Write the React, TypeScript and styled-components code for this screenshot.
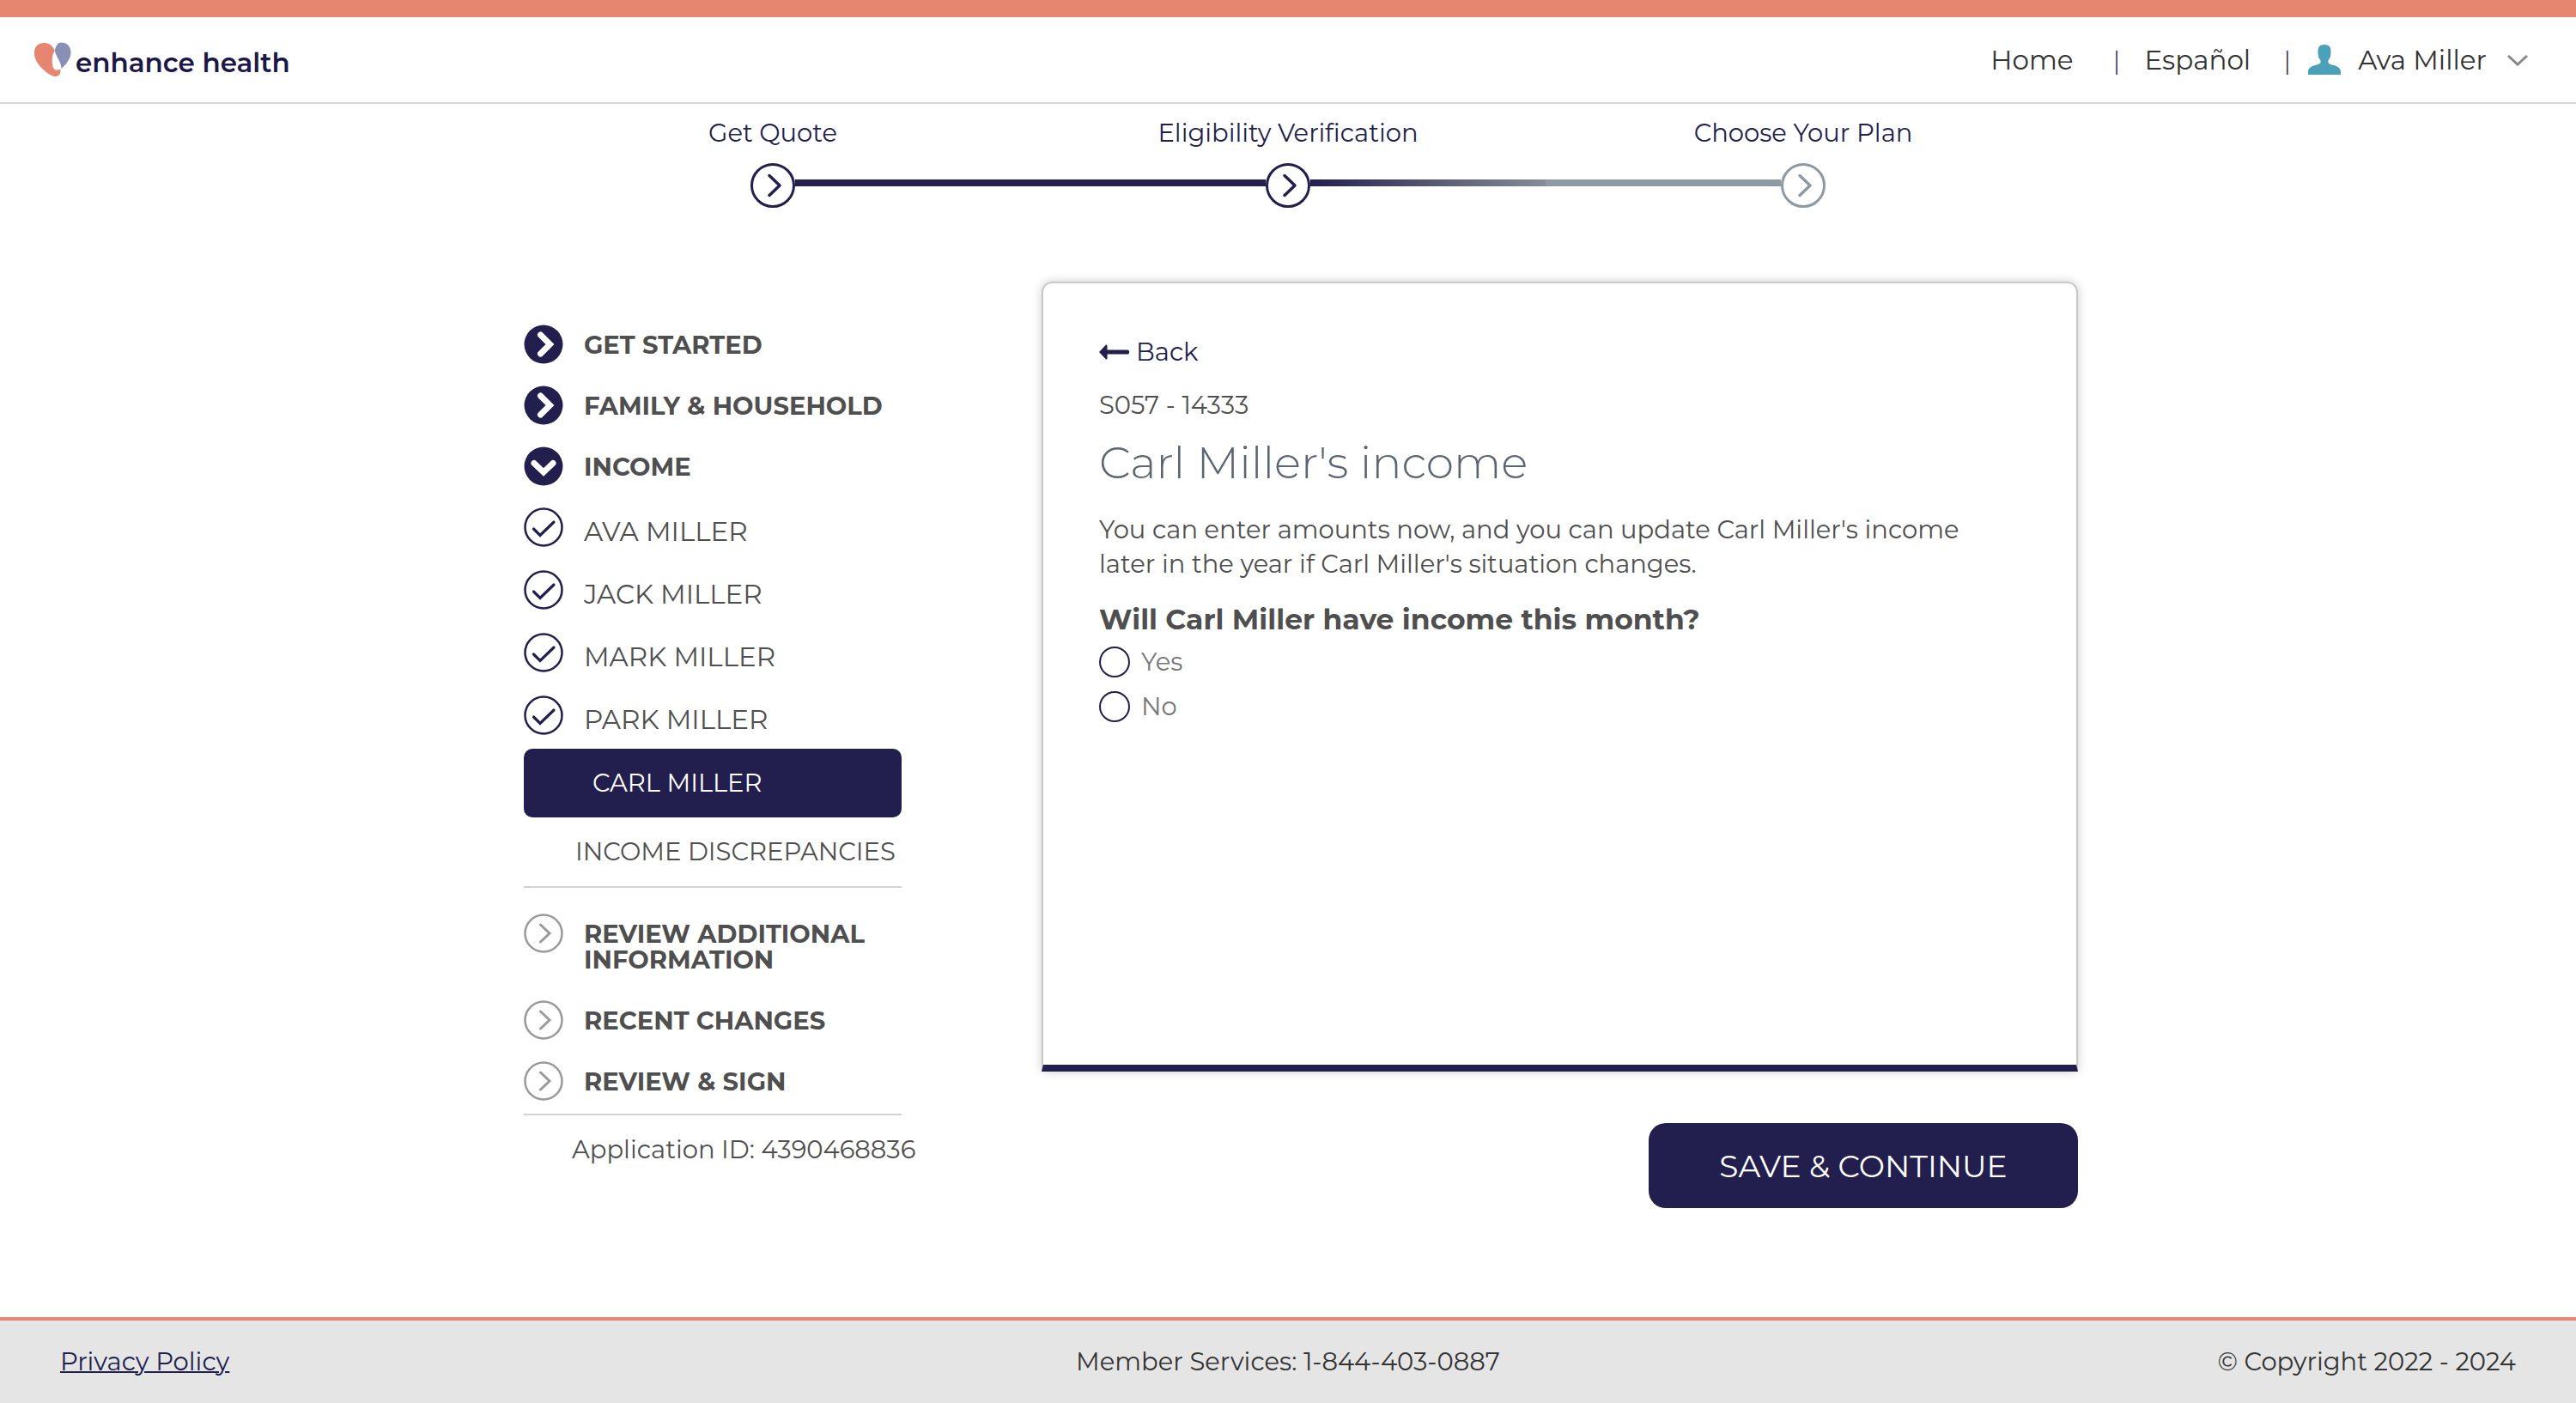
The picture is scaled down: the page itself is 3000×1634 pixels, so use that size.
import React, { useState } from 'react';
import styled, { createGlobalStyle } from 'styled-components';

const navy = '#221f4f';
const coral = '#e68570';
const slate = '#8e99a5';
const ink = '#4f4f4f';

const GlobalStyle = createGlobalStyle`
  *, *::before, *::after { box-sizing: border-box; }
  body {
    margin: 0;
    background: #fff;
    color: ${ink};
    font-family: Montserrat, Inter, "Open Sans", sans-serif;
    font-size: 29px;
    font-weight: 400;
    line-height: 36px;
  }
  h1, p, ul, ol, fieldset, legend { margin: 0; padding: 0; border: 0; }
  ul, ol { list-style: none; }
  a { color: inherit; text-decoration: none; }
  button { font: inherit; color: inherit; border: 0; padding: 0; background: none; cursor: pointer; }
  svg { display: block; flex: none; }
`;

const Page = styled.div`
  min-height: 100vh;
  display: flex;
  flex-direction: column;
`;

const Header = styled.header`
  display: flex;
  align-items: center;
  justify-content: space-between;
  height: 121px;
  padding: 0 56px 0 40px;
  border-top: 20px solid ${coral};
  border-bottom: 2px solid #d8d8d8;
`;

const Brand = styled.a`
  display: flex;
  align-items: flex-end;
  gap: 5px;
  color: #1b1848;
  font-size: 31px;
  font-weight: 600;
`;

const Nav = styled.nav`
  display: flex;
  align-items: center;
  color: #333;
  font-size: 31px;
`;

const Separator = styled.span<{ $before: number; $after: number }>`
  margin: 0 ${({ $after }) => $after}px 0 ${({ $before }) => $before}px;
  color: ${navy};
  font-weight: 300;
`;

const AccountButton = styled.button`
  display: flex;
  align-items: center;
  gap: 20px;
`;

const Steps = styled.ol`
  display: grid;
  grid-template-columns: repeat(3, 1fr);
  width: 60%;
  margin: 0 auto;
  padding-top: 16px;
`;

const Step = styled.li`
  display: flex;
  flex-direction: column;
  gap: 17px;
  color: ${navy};
  text-align: center;
`;

const Track = styled.div`
  display: flex;
  align-items: center;
`;

const Segment = styled.span<{ $fill?: string }>`
  flex: 1;
  height: 8px;
  margin-bottom: 6px;
  background: ${({ $fill }) => $fill ?? 'transparent'};
`;

const Main = styled.main`
  display: flex;
  align-items: flex-start;
  gap: 163px;
  width: 100%;
  max-width: 1840px;
  margin: 86px auto 60px;
  padding-left: 30px;
`;

const Sidebar = styled.nav`
  flex: none;
  width: 440px;
  padding-top: 50px;
  line-height: 30px;
`;

const SectionList = styled.ul`
  display: grid;
  gap: 25px;
`;

const PersonList = styled.ul`
  display: grid;
  gap: 27px;
  margin: 25px 0 16px;
`;

const NavRow = styled.a`
  display: flex;
  align-items: flex-start;
  gap: 24px;
`;

const SectionLabel = styled.span`
  padding: 9px 0 7px;
  font-weight: 700;
`;

const PersonLabel = styled.span`
  padding-top: 10px;
  font-size: 31px;
  line-height: 36px;
`;

const CurrentItem = styled.a`
  display: flex;
  align-items: center;
  height: 80px;
  padding-left: 80px;
  border-radius: 10px;
  background: ${navy};
  color: #fff;
`;

const PlainItem = styled.a`
  display: block;
  padding: 25px 0 25px 60px;
  white-space: nowrap;
`;

const Divider = styled.hr<{ $before?: number; $after?: number }>`
  height: 2px;
  margin: ${({ $before }) => $before ?? 0}px 0 ${({ $after }) => $after ?? 0}px;
  border: 0;
  background: #d2d2d2;
`;

const ApplicationId = styled.p`
  padding: 25px 0 0 56px;
  white-space: nowrap;
`;

const Content = styled.form`
  flex: 1;
  display: flex;
  flex-direction: column;
  align-items: flex-end;
  gap: 60px;
`;

const Card = styled.section`
  width: 100%;
  min-height: 920px;
  padding: 60px 80px 60px 65px;
  border: 2px solid #c9c9c9;
  border-bottom: 8px solid ${navy};
  border-radius: 12px 12px 0 0;
  box-shadow: 0 0 12px rgba(0, 0, 0, 0.2);
  line-height: 40px;
`;

const BackButton = styled.button`
  display: flex;
  align-items: center;
  gap: 8px;
  color: ${navy};
`;

const ScreenCode = styled.p`
  margin-top: 22px;
`;

const Title = styled.h1`
  margin-top: 17px;
  color: #5c6673;
  font-size: 52px;
  font-weight: 300;
  line-height: 60px;
`;

const Intro = styled.p`
  margin-top: 28px;
`;

const Question = styled.fieldset`
  margin-top: 24px;
`;

const Legend = styled.legend`
  font-size: 33px;
  font-weight: 700;
`;

const Option = styled.label`
  display: flex;
  align-items: center;
  gap: 13px;
  width: fit-content;
  margin-top: 10px;
  color: #777;
  cursor: pointer;

  & + & { margin-top: 12px; }
`;

const Radio = styled.input`
  appearance: none;
  width: 36px;
  height: 36px;
  margin: 2px 0;
  border: 2px solid ${navy};
  border-radius: 50%;
  background: #fff;

  &:checked { background: radial-gradient(${navy} 50%, #fff 54%); }
`;

const SaveButton = styled.button`
  width: 500px;
  height: 99px;
  border-radius: 20px;
  background: ${navy};
  color: #fff;
  font-size: 36px;
`;

const Footer = styled.footer`
  display: grid;
  grid-template-columns: 1fr auto 1fr;
  align-items: center;
  height: 100px;
  margin-top: auto;
  padding: 0 70px;
  border-top: 4px solid ${coral};
  background: #e5e5e5;
  color: #333;
`;

const PolicyLink = styled.a`
  justify-self: start;
  color: ${navy};
  text-decoration: underline;
  text-decoration-thickness: 2px;
`;

const Copyright = styled.span`
  justify-self: end;
`;

const Logo = () => (
  <svg width="43" height="42" viewBox="0 0 43 42" aria-hidden="true">
    <path
      d="M0 13C0 4 5 1 12 1C18 1 22 5 23.500 10C20.500 16 20.500 20 21 26C21.500 31 24 33 27 32.500C29.500 32 31 31 30.500 34C30 38.500 27.500 40 24 40C19 40 0 27 0 13Z"
      fill={coral}
    />
    <path d="M23.500 10C25 5 27 .5 31 .5C38 .5 42.500 5 42.500 12C42.500 19 37 26 31.500 31C31 23 28 22 23.500 10Z" fill="#8890b5" />
  </svg>
);

const PersonIcon = () => (
  <svg width="38" height="35" viewBox="0 0 38 35" aria-hidden="true">
    <path
      d="M19 0C25 0 26.500 3 26.500 8C26.500 14 25.500 16 23.500 18V21C25 23 27 23 30 24C35 25.500 38 27.500 38 32V35H0V32C0 27.500 3 25.500 8 24C11 23 13 23 14.500 21V18C12.500 16 11.500 14 11.500 8C11.500 3 13 0 19 0Z"
      fill="#4ba0ba"
    />
  </svg>
);

const CaretDown = () => (
  <svg width="28" height="14" viewBox="0 0 28 14" fill="none" stroke="#888" strokeWidth="3" aria-hidden="true">
    <path d="M5 2L16 12L27 2" />
  </svg>
);

const StepIcon = ({ color }: { color: string }) => (
  <svg width="52" height="52" viewBox="0 0 52 52" fill="none" stroke={color} strokeWidth="3" aria-hidden="true">
    <circle cx="26" cy="26" r="24.500" />
    <path d="M22 14.500L34 26L22 37.500" strokeWidth="3.500" strokeLinecap="round" strokeLinejoin="round" />
  </svg>
);

const SolidChevron = ({ down }: { down?: boolean }) => (
  <svg width="46" height="46" viewBox="0 0 46 46" fill="none" aria-hidden="true">
    <circle cx="23" cy="23" r="22.500" fill={navy} />
    <path
      d={down ? 'M12 19.500L23 30L34 19.500' : 'M19.500 12L30.500 23L19.500 34'}
      stroke="#fff"
      strokeWidth="7"
      strokeLinecap="round"
    />
  </svg>
);

const CheckIcon = () => (
  <svg width="46" height="46" viewBox="0 0 46 46" fill="none" stroke={navy} aria-hidden="true">
    <circle cx="23" cy="23" r="21.500" strokeWidth="2.500" />
    <path d="M11.500 25L19 32.500L35 17" strokeWidth="3.200" strokeLinecap="round" />
  </svg>
);

const OutlineChevron = () => (
  <svg width="46" height="46" viewBox="0 0 46 46" fill="none" stroke="#9a9a9a" aria-hidden="true">
    <circle cx="23" cy="23" r="21.500" strokeWidth="2.500" />
    <path d="M19.500 13L30 23L19.500 33" strokeWidth="3" strokeLinecap="round" />
  </svg>
);

const BackArrow = () => (
  <svg width="35" height="18" viewBox="0 0 35 18" fill={navy} aria-hidden="true">
    <path d="M0 9L8 .5Q9.500 0 9.500 2V6.500H33Q35 6.500 35 8V10Q35 11.500 33 11.500H9.500V16Q9.500 18 8 17.500Z" />
  </svg>
);

const steps = [
  { label: 'Get Quote', color: navy, after: navy },
  {
    label: 'Eligibility Verification',
    color: navy,
    before: navy,
    after: `linear-gradient(90deg, ${navy}, #868d95)`,
  },
  { label: 'Choose Your Plan', color: slate, before: slate },
];

const openSections = ['GET STARTED', 'FAMILY & HOUSEHOLD', 'INCOME'];
const people = ['AVA MILLER', 'JACK MILLER', 'MARK MILLER', 'PARK MILLER'];
const nextSections = ['REVIEW ADDITIONAL INFORMATION', 'RECENT CHANGES', 'REVIEW & SIGN'];

export default function App() {
  const [answer, setAnswer] = useState('');

  return (
    <Page>
      <GlobalStyle />
      <Header>
        <Brand href="#home">
          <Logo />
          enhance health
        </Brand>
        <Nav>
          <a href="#home">Home</a>
          <Separator $before={46} $after={28}>|</Separator>
          <a href="#es">Español</a>
          <Separator $before={38} $after={20}>|</Separator>
          <AccountButton type="button">
            <PersonIcon />
            Ava Miller
            <CaretDown />
          </AccountButton>
        </Nav>
      </Header>

      <Steps>
        {steps.map((step) => (
          <Step key={step.label}>
            {step.label}
            <Track>
              <Segment $fill={step.before} />
              <StepIcon color={step.color} />
              <Segment $fill={step.after} />
            </Track>
          </Step>
        ))}
      </Steps>

      <Main>
        <Sidebar>
          <SectionList>
            {openSections.map((name) => (
              <li key={name}>
                <NavRow href="#section">
                  <SolidChevron down={name === 'INCOME'} />
                  <SectionLabel>{name}</SectionLabel>
                </NavRow>
              </li>
            ))}
          </SectionList>
          <PersonList>
            {people.map((name) => (
              <li key={name}>
                <NavRow href="#person">
                  <CheckIcon />
                  <PersonLabel>{name}</PersonLabel>
                </NavRow>
              </li>
            ))}
          </PersonList>
          <CurrentItem href="#person" aria-current="page">CARL MILLER</CurrentItem>
          <PlainItem href="#discrepancies">INCOME DISCREPANCIES</PlainItem>
          <Divider $after={30} />
          <SectionList>
            {nextSections.map((name) => (
              <li key={name}>
                <NavRow href="#section">
                  <OutlineChevron />
                  <SectionLabel>{name}</SectionLabel>
                </NavRow>
              </li>
            ))}
          </SectionList>
          <Divider $before={15} />
          <ApplicationId>Application ID: 4390468836</ApplicationId>
        </Sidebar>

        <Content onSubmit={(event) => event.preventDefault()}>
          <Card>
            <BackButton type="button">
              <BackArrow />
              Back
            </BackButton>
            <ScreenCode>S057 - 14333</ScreenCode>
            <Title>Carl Miller's income</Title>
            <Intro>
              You can enter amounts now, and you can update Carl Miller's income later in the year if Carl
              Miller's situation changes.
            </Intro>
            <Question>
              <Legend>Will Carl Miller have income this month?</Legend>
              {['Yes', 'No'].map((value) => (
                <Option key={value}>
                  <Radio
                    type="radio"
                    name="income"
                    value={value}
                    checked={answer === value}
                    onChange={() => setAnswer(value)}
                  />
                  {value}
                </Option>
              ))}
            </Question>
          </Card>
          <SaveButton type="submit">SAVE &amp; CONTINUE</SaveButton>
        </Content>
      </Main>

      <Footer>
        <PolicyLink href="#privacy">Privacy Policy</PolicyLink>
        <span>Member Services: 1-844-403-0887</span>
        <Copyright>© Copyright 2022 - 2024</Copyright>
      </Footer>
    </Page>
  );
}
